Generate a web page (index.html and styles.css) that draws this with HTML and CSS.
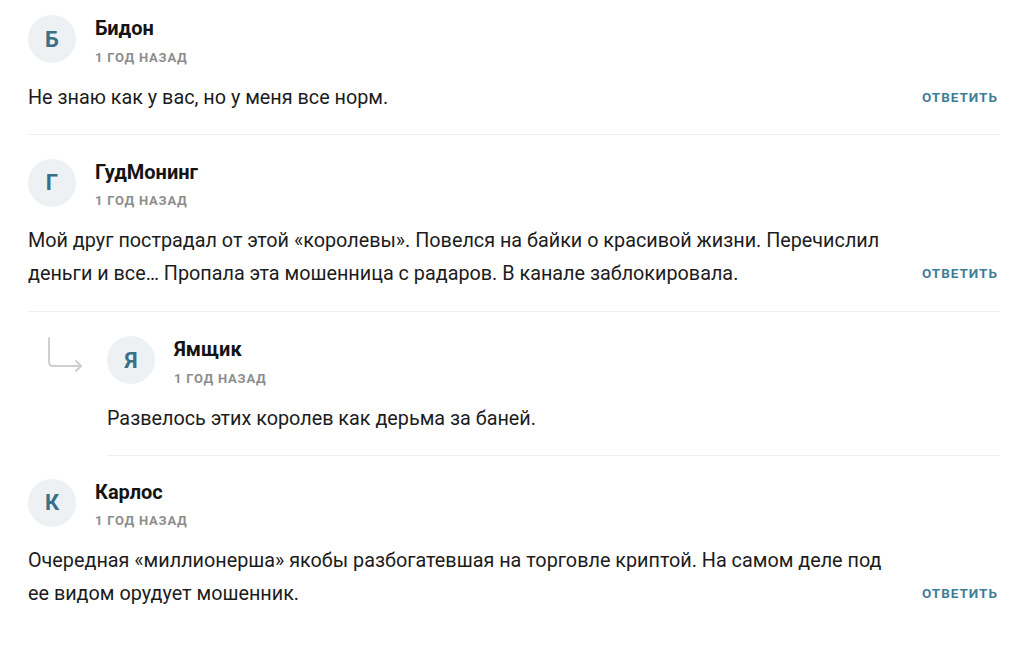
FILE: index.html
```html
<!DOCTYPE html>
<html lang="ru">
<head>
<meta charset="utf-8">
<link rel="stylesheet" href="styles.css">
</head>
<body>
<div class="thread">
  <div class="comment first">
    <div class="head">
      <div class="avatar">Б</div>
      <div class="meta">
        <div class="name">Бидон</div>
        <div class="date">1 год назад</div>
      </div>
    </div>
    <div class="body">
      <p class="text">Не знаю как у вас, но у меня все норм.</p>
      <a class="reply-btn">Ответить</a>
    </div>
  </div>

  <div class="comment">
    <div class="head">
      <div class="avatar">Г</div>
      <div class="meta">
        <div class="name">ГудМонинг</div>
        <div class="date">1 год назад</div>
      </div>
    </div>
    <div class="body">
      <p class="text">Мой друг пострадал от этой «королевы». Повелся на байки о красивой жизни. Перечислил деньги и все… Пропала эта мошенница с радаров. В канале заблокировала.</p>
      <a class="reply-btn">Ответить</a>
    </div>
  </div>

  <div class="reply-row">
    <div class="reply-arrow">
      <svg width="40" height="40" viewBox="0 0 40 40" fill="none" stroke="#cfcfcf" stroke-width="2" stroke-linecap="round" stroke-linejoin="round">
        <path d="M4 3 V27 q0 4 4 4 H36"/>
        <path d="M31 26 l5 5 -5 5"/>
      </svg>
    </div>
    <div class="comment reply">
      <div class="head">
        <div class="avatar">Я</div>
        <div class="meta">
          <div class="name">Ямщик</div>
          <div class="date">1 год назад</div>
        </div>
      </div>
      <div class="body">
        <p class="text">Развелось этих королев как дерьма за баней.</p>
      </div>
    </div>
  </div>

  <div class="comment last">
    <div class="head">
      <div class="avatar">К</div>
      <div class="meta">
        <div class="name">Карлос</div>
        <div class="date">1 год назад</div>
      </div>
    </div>
    <div class="body">
      <p class="text">Очередная «миллионерша» якобы разбогатевшая на торговле криптой. На самом деле под ее видом орудует мошенник.</p>
      <a class="reply-btn">Ответить</a>
    </div>
  </div>
</div>
</body>
</html>
```

FILE: styles.css
```css
html, body {
  margin: 0;
  padding: 0;
  background: #ffffff;
}

body {
  font-family: Roboto, "Liberation Sans", Arial, sans-serif;
  color: #1c1c1c;
}

.thread {
  width: 972px;
  margin-left: 28px;
}

.comment {
  padding: 24px 0 21px;
  border-bottom: 1px solid #efefef;
}

.comment.first {
  padding-top: 15px;
  padding-bottom: 20px;
}

.comment.last {
  padding-top: 23px;
  border-bottom: none;
}

.head {
  display: flex;
  align-items: flex-start;
  gap: 19px;
}

.avatar {
  width: 48px;
  height: 48px;
  border-radius: 50%;
  background: #eef1f4;
  color: #3b6f87;
  font-size: 22px;
  font-weight: 700;
  display: flex;
  align-items: center;
  justify-content: center;
  flex: none;
}

.meta {
  display: flex;
  flex-direction: column;
  margin-top: 1px;
}

.name {
  font-size: 20px;
  font-weight: 700;
  line-height: 24px;
  color: #141414;
}

.date {
  margin-top: 8.5px;
  font-size: 13px;
  line-height: 18px;
  font-weight: 700;
  color: #8d8d8d;
  text-transform: uppercase;
  letter-spacing: 0.8px;
}

.body {
  display: flex;
  align-items: flex-end;
  justify-content: space-between;
  gap: 24px;
  margin-top: 14px;
}

.text {
  flex: 1;
  margin: 0;
  font-size: 19.8px;
  line-height: 33px;
  color: #1c1c1c;
}

.reply-btn {
  flex: none;
  font-size: 13.5px;
  line-height: 33px;
  font-weight: 700;
  color: #3f7d98;
  text-transform: uppercase;
  letter-spacing: 1px;
  padding-right: 2px;
  cursor: pointer;
}

.reply-row {
  display: flex;
}

.reply-arrow {
  width: 79px;
  flex: none;
  padding: 23px 0 0 17px;
  box-sizing: border-box;
}

.reply-arrow svg {
  display: block;
}

.comment.reply {
  flex: 1;
  padding-bottom: 20px;
}
```
